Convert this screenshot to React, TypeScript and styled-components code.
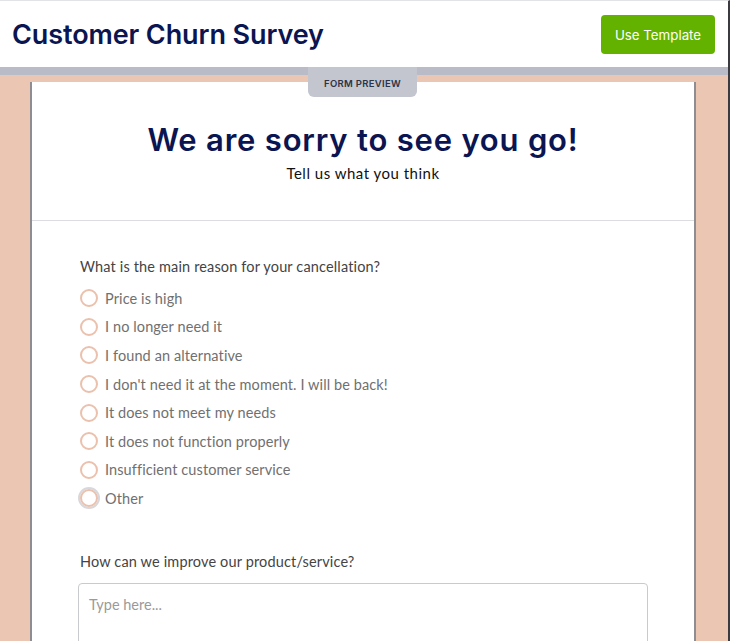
import React from "react";
import styled, { createGlobalStyle } from "styled-components";

const Global = createGlobalStyle`
  html, body { margin: 0; padding: 0; }
  body { background: #ebc6b3; overflow: hidden; font-family: Lato, "Noto Sans", sans-serif; }
  * { box-sizing: border-box; }
`;

const Page = styled.div`
  width: 730px;
  height: 641px;
  display: flex;
  flex-direction: column;
  border-right: 2px solid #3a3a40;
  border-top: 1px solid #e2e3e6;
  position: relative;
  overflow: hidden;
`;

const Header = styled.header`
  height: 66px;
  flex: none;
  background: #fff;
  display: flex;
  align-items: center;
  justify-content: space-between;
  padding: 0 13px 0 12px;
`;

const Title = styled.h1`
  margin: 0;
  font-family: Inter, "Noto Sans", sans-serif;
  font-weight: 600;
  font-size: 27px;
  letter-spacing: -0.1px;
  color: #0a1551;
`;

const UseButton = styled.button`
  width: 114px;
  height: 39px;
  border: none;
  border-radius: 4px;
  background: #64b200;
  color: #fff;
  font-family: Inter, "Noto Sans", sans-serif;
  font-size: 13.3px;
  font-weight: 400;
  margin-top: 1px;
`;

const Band = styled.div`
  height: 8px;
  flex: none;
  background: #b9bcc6;
`;

const Stage = styled.main`
  flex: 1;
  background: #ebc6b3;
  padding: 7px 32px 0 30px;
  display: flex;
  min-height: 0;
`;

const Card = styled.section`
  flex: 1;
  background: #fff;
  border-left: 2px solid #8d8d92;
  border-right: 2px solid #8d8d92;
  display: flex;
  flex-direction: column;
`;

const Tab = styled.div`
  position: absolute;
  top: 66px;
  left: 308px;
  width: 109px;
  height: 30px;
  background: #c3c5cf;
  border-radius: 0 0 6px 6px;
  display: flex;
  align-items: center;
  justify-content: center;
  padding-top: 3px;
  font-family: Inter, "Noto Sans", sans-serif;
  font-size: 9.5px;
  font-weight: 600;
  letter-spacing: 0.3px;
  color: #2c3345;
`;

const Intro = styled.div`
  padding: 38px 0 38px;
  text-align: center;
  border-bottom: 1px solid #dcdde2;
`;

const Heading = styled.h2`
  margin: 0;
  font-family: Inter, "Noto Sans", sans-serif;
  font-weight: 600;
  font-size: 31px;
  line-height: 40px;
  letter-spacing: 0.8px;
  color: #0a1551;
`;

const Sub = styled.p`
  margin: 5px 0 0;
  font-family: Lato, "Noto Sans", sans-serif;
  font-size: 15px;
  line-height: 17px;
  letter-spacing: 0.5px;
  color: #111;
`;

const Body = styled.div`
  padding: 36px 46px 0 46px;
  display: flex;
  flex-direction: column;
`;

const Question = styled.div`
  font-size: 14.5px;
  line-height: 20px;
  letter-spacing: 0.15px;
  color: #444;
  padding-left: 2px;
`;

const Options = styled.div`
  margin-top: 7px;
  display: flex;
  flex-direction: column;
`;

const Option = styled.label`
  height: 28.6px;
  display: flex;
  align-items: center;
  gap: 7px;
  font-size: 14.5px;
  letter-spacing: 0.1px;
  color: #707070;
`;

const Radio = styled.span<{ $focus?: boolean }>`
  width: 18px;
  height: 18px;
  margin-left: 2px;
  border-radius: 50%;
  border: 2px solid #ebc1ad;
  box-shadow: ${(p) => (p.$focus ? "0 0 0 2px #d8d8dc" : "none")};
  flex: none;
`;

const Question2 = styled(Question)`
  margin-top: 39px;
`;

const TextArea = styled.div`
  margin-top: 11px;
  width: 570px;
  height: 90px;
  border: 1px solid #c9cace;
  border-radius: 4px;
  padding: 12px 10px;
  font-size: 14.5px;
  color: #9a9a9a;
`;

const reasons = [
  "Price is high",
  "I no longer need it",
  "I found an alternative",
  "I don't need it at the moment. I will be back!",
  "It does not meet my needs",
  "It does not function properly",
  "Insufficient customer service",
  "Other",
];

export default function App() {
  return (
    <>
      <Global />
      <Page>
        <Header>
          <Title>Customer Churn Survey</Title>
          <UseButton>Use Template</UseButton>
        </Header>
        <Band />
        <Stage>
          <Card>
            <Intro>
              <Heading>We are sorry to see you go!</Heading>
              <Sub>Tell us what you think</Sub>
            </Intro>
            <Body>
              <Question>What is the main reason for your cancellation?</Question>
              <Options>
                {reasons.map((r, i) => (
                  <Option key={r}>
                    <Radio $focus={i === reasons.length - 1} />
                    {r}
                  </Option>
                ))}
              </Options>
              <Question2>How can we improve our product/service?</Question2>
              <TextArea>Type here...</TextArea>
            </Body>
          </Card>
        </Stage>
        <Tab>FORM PREVIEW</Tab>
      </Page>
    </>
  );
}
